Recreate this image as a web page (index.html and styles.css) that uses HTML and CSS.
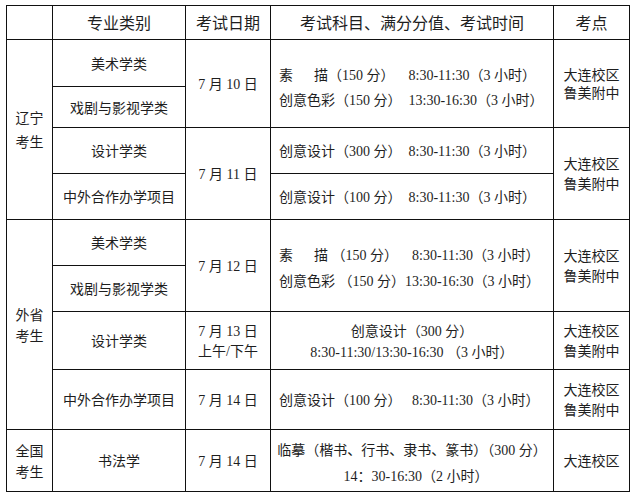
FILE: index.html
```html
<!DOCTYPE html>
<html lang="zh-CN">
<head>
<meta charset="utf-8">
<title>考试安排</title>
<link rel="stylesheet" href="styles.css">
</head>
<body>
<div class="sheet">
  <div class="cell head"></div>
  <div class="cell head">专业类别</div>
  <div class="cell head">考试日期</div>
  <div class="cell head">考试科目、满分分值、考试时间</div>
  <div class="cell head">考点</div>

  <div class="cell region span4 lh-wide"><span>辽宁</span><span>考生</span></div>
  <div class="cell">美术学类</div>
  <div class="cell span2">7 月 10 日</div>
  <div class="cell span2 subject lh-25">
    <span>素　&nbsp;&nbsp;描（150 分）　&nbsp;&nbsp;8:30-11:30（3 小时）</span>
    <span>创意色彩（150 分）&nbsp;&nbsp;13:30-16:30（3 小时）</span>
  </div>
  <div class="cell span2 site lh-18"><span>大连校区</span><span>鲁美附中</span></div>
  <div class="cell">戏剧与影视学类</div>

  <div class="cell">设计学类</div>
  <div class="cell span2">7 月 11 日</div>
  <div class="cell subject">创意设计（300 分）　8:30-11:30（3 小时）</div>
  <div class="cell span2 site"><span>大连校区</span><span>鲁美附中</span></div>
  <div class="cell">中外合作办学项目</div>
  <div class="cell subject">创意设计（100 分）　8:30-11:30（3 小时）</div>

  <div class="cell region span4"><span>外省</span><span>考生</span></div>
  <div class="cell">美术学类</div>
  <div class="cell span2">7 月 12 日</div>
  <div class="cell span2 subject lh-26">
    <span>素　&nbsp;&nbsp;描 （150 分）　&nbsp;&nbsp;8:30-11:30（3 小时）</span>
    <span>创意色彩 （150 分）13:30-16:30（3 小时）</span>
  </div>
  <div class="cell span2 site"><span>大连校区</span><span>鲁美附中</span></div>
  <div class="cell">戏剧与影视学类</div>

  <div class="cell">设计学类</div>
  <div class="cell date2"><span>7 月 13 日</span><span>上午/下午</span></div>
  <div class="cell lh-21">
    <span>创意设计（300 分）</span>
    <span>8:30-11:30/13:30-16:30 （3 小时）</span>
  </div>
  <div class="cell site"><span>大连校区</span><span>鲁美附中</span></div>

  <div class="cell">中外合作办学项目</div>
  <div class="cell">7 月 14 日</div>
  <div class="cell subject">创意设计（100 分）　&nbsp;8:30-11:30（3 小时）</div>
  <div class="cell site"><span>大连校区</span><span>鲁美附中</span></div>

  <div class="cell region"><span>全国</span><span>考生</span></div>
  <div class="cell">书法学</div>
  <div class="cell">7 月 14 日</div>
  <div class="cell lh-26">
    <span>临摹（楷书、行书、隶书、篆书）（300 分）</span>
    <span class="shift">14：30-16:30（2 小时）</span>
  </div>
  <div class="cell site">大连校区</div>
</div>
</body>
</html>
```
FILE: styles.css
```css
html, body {
  margin: 0;
  padding: 0;
  background: #ffffff;
}

body {
  font-family: "Liberation Serif", "Noto Sans CJK SC", serif;
  font-size: 14px;
  color: #1e1e1e;
}

.sheet {
  margin: 5px 0 0 6px;
  width: 624px;
  box-sizing: border-box;
  display: grid;
  grid-template-columns: 46px 133px 85px 283px 76px;
  grid-template-rows: 34px 47px 41px 46px 46px 46px 46px 58px 60px 62px;
  border-top: 1px solid #111;
  border-left: 1px solid #111;
}

.cell {
  box-sizing: border-box;
  border-right: 1px solid #111;
  border-bottom: 1px solid #111;
  display: flex;
  flex-direction: column;
  justify-content: center;
  align-items: center;
  text-align: center;
  padding-top: 3px;
  line-height: 20px;
  white-space: nowrap;
}

.head {
  font-size: 16px;
  padding-top: 2px;
}

.span2 { grid-row: span 2; }
.span4 { grid-row: span 4; }

.region { line-height: 21px; }
.region.lh-wide { line-height: 24px; }

.subject {
  align-items: flex-start;
  text-align: left;
  padding-left: 8px;
}

.date2 { line-height: 20px; }
.site { line-height: 20px; }

.shift { padding-left: 8px; }

.lh-18 { line-height: 18px; }
.lh-21 { line-height: 21px; }
.lh-25 { line-height: 25px; padding-top: 8px; }
.lh-26 { line-height: 26px; padding-top: 6px; }
```
